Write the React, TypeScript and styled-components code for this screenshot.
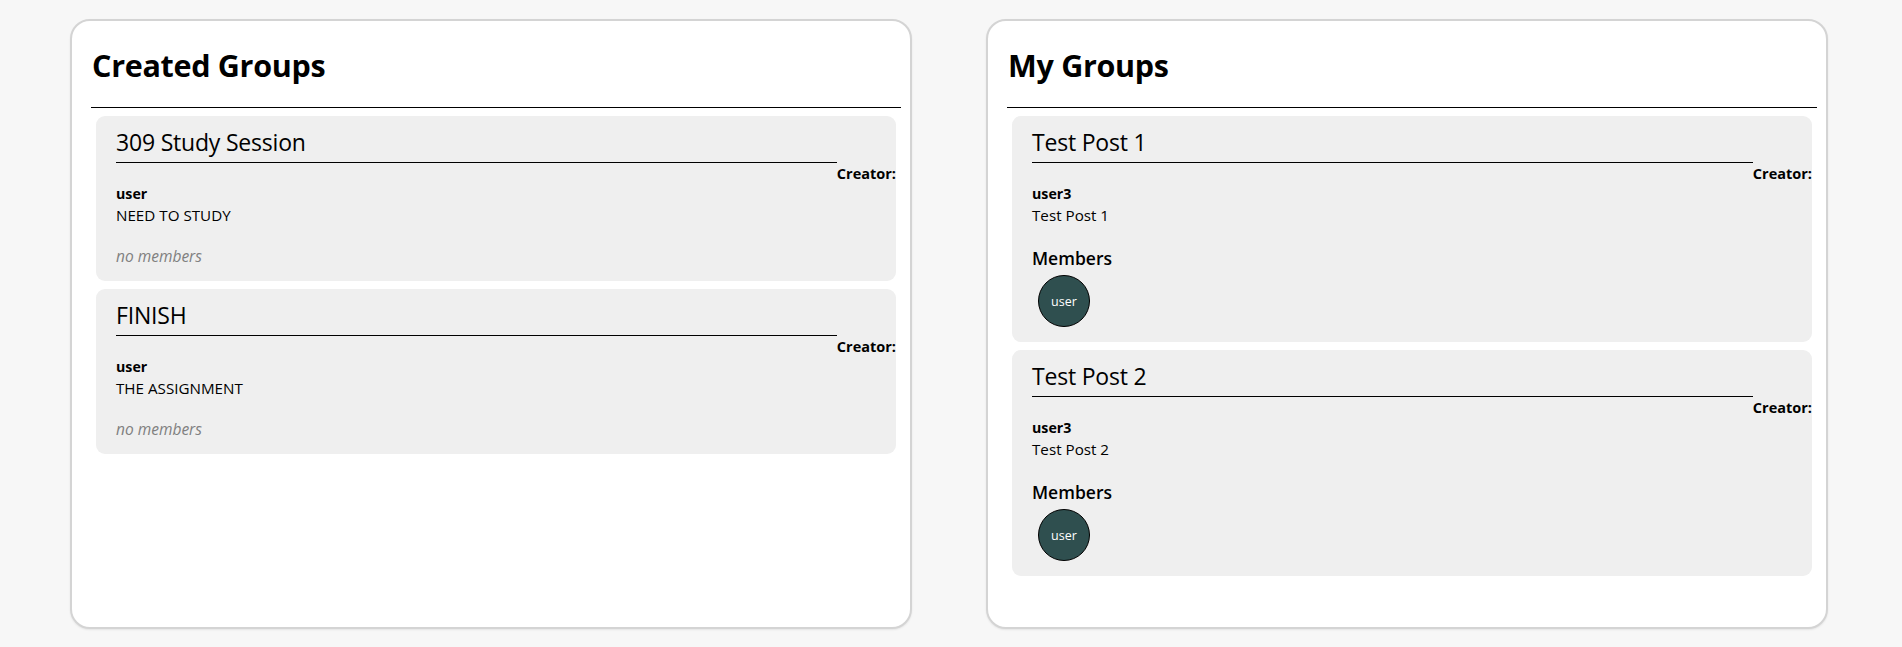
import React from "react";
import styled, { createGlobalStyle } from "styled-components";

const GlobalStyle = createGlobalStyle`
  html, body {
    margin: 0;
    padding: 0;
    background: #f7f7f7;
  }
  body {
    font-family: "Open Sans", "Noto Sans", "Liberation Sans", sans-serif;
    color: #000;
  }
  * { box-sizing: border-box; }
`;

const Page = styled.div`
  display: flex;
  align-items: flex-start;
  gap: 74px;
  padding: 19px 0 0 70px;
  min-height: 647px;
`;

const Panel = styled.section`
  width: 842px;
  height: 610px;
  background: #fff;
  border: 2px solid #d4d4d4;
  border-radius: 20px;
  box-shadow: 0 1px 2px rgba(0, 0, 0, 0.08);
  padding: 27px 9px 0 19px;
  display: flex;
  flex-direction: column;
  overflow: hidden;
`;

const PanelTitle = styled.h1`
  margin: 0;
  padding-left: 1px;
  font-size: 30.5px;
  line-height: 34px;
  font-weight: 700;
  letter-spacing: -0.3px;
`;

const Divider = styled.hr`
  margin: 25px 0 0;
  border: none;
  border-top: 1px solid #000;
  height: 0;
`;

const CardList = styled.div`
  display: flex;
  flex-direction: column;
  gap: 8px;
  margin: 8px 5px 0;
`;

const Card = styled.article`
  background: #efefef;
  border-radius: 9px;
  padding: 0 0 15px 20px;
`;

const CardHeader = styled.div`
  display: flex;
  align-items: flex-start;
`;

const CardTitle = styled.h3`
  flex: 1;
  margin: 14px 0 0;
  padding-bottom: 8px;
  border-bottom: 1px solid #000;
  font-size: 23px;
  line-height: 24px;
  font-weight: 500;
  letter-spacing: -0.2px;
`;

const CreatorLabel = styled.span`
  margin-top: 49px;
  font-size: 14.5px;
  line-height: 18px;
  font-weight: 700;
  white-space: nowrap;
`;

const CreatorName = styled.div`
  font-size: 14.2px;
  line-height: 22px;
  font-weight: 700;
`;

const Description = styled.div`
  font-size: 15.2px;
  line-height: 21px;
  font-weight: 400;
`;

const EmptyMembers = styled.div`
  margin-top: 20px;
  font-size: 15.5px;
  line-height: 20px;
  font-style: italic;
  color: #808080;
`;

const MembersHeading = styled.h4`
  margin: 22px 0 0;
  font-size: 17.5px;
  line-height: 20px;
  font-weight: 600;
`;

const MemberRow = styled.div`
  display: flex;
  gap: 8px;
  margin: 7px 0 0 6px;
`;

const MemberBubble = styled.div`
  width: 52px;
  height: 52px;
  border-radius: 50%;
  background: #2f4f4f;
  border: 1px solid #000;
  color: #fff;
  display: flex;
  align-items: center;
  justify-content: center;
  font-size: 12.5px;
  font-weight: 500;
`;

type Group = {
  title: string;
  creator: string;
  description: string;
  members: string[];
};

const created: Group[] = [
  { title: "309 Study Session", creator: "user", description: "NEED TO STUDY", members: [] },
  { title: "FINISH", creator: "user", description: "THE ASSIGNMENT", members: [] },
];

const mine: Group[] = [
  { title: "Test Post 1", creator: "user3", description: "Test Post 1", members: ["user"] },
  { title: "Test Post 2", creator: "user3", description: "Test Post 2", members: ["user"] },
];

function GroupCard({ group }: { group: Group }) {
  return (
    <Card>
      <CardHeader>
        <CardTitle>{group.title}</CardTitle>
        <CreatorLabel>Creator:</CreatorLabel>
      </CardHeader>
      <CreatorName>{group.creator}</CreatorName>
      <Description>{group.description}</Description>
      {group.members.length === 0 ? (
        <EmptyMembers>no members</EmptyMembers>
      ) : (
        <>
          <MembersHeading>Members</MembersHeading>
          <MemberRow>
            {group.members.map((m) => (
              <MemberBubble key={m}>{m}</MemberBubble>
            ))}
          </MemberRow>
        </>
      )}
    </Card>
  );
}

function GroupPanel({ title, groups }: { title: string; groups: Group[] }) {
  return (
    <Panel>
      <PanelTitle>{title}</PanelTitle>
      <Divider />
      <CardList>
        {groups.map((g) => (
          <GroupCard key={g.title} group={g} />
        ))}
      </CardList>
    </Panel>
  );
}

export default function App() {
  return (
    <>
      <GlobalStyle />
      <Page>
        <GroupPanel title="Created Groups" groups={created} />
        <GroupPanel title="My Groups" groups={mine} />
      </Page>
    </>
  );
}
